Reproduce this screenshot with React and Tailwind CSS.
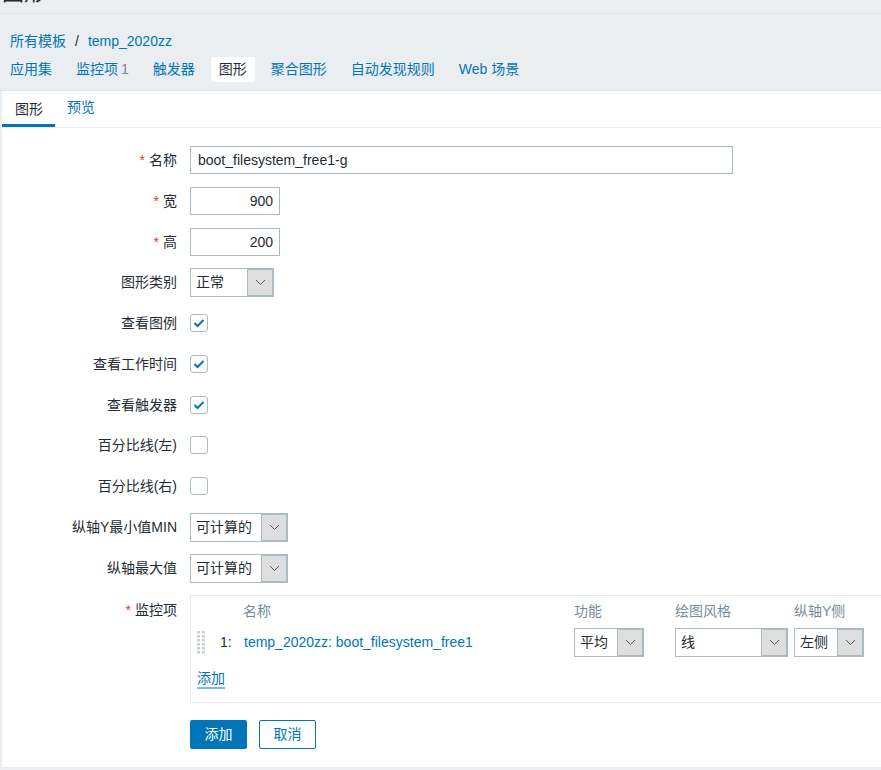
import React from "react";

const FONT = "font-['Liberation_Sans','Noto_Sans_CJK_SC',sans-serif]";

function Chevron() {
  return (
    <svg width="11" height="7" viewBox="0 0 11 7">
      <path d="M1 1 L5.5 5.5 L10 1" fill="none" stroke="#4f5a60" strokeWidth="1" />
    </svg>
  );
}

function Select({ value, w, arrowW = "w-[26px]" }) {
  return (
    <div className={`flex h-[29px] border border-[#acbbc2] bg-white ${w}`}>
      <div className="flex-1 flex items-center pl-[5px] text-[14px] text-[#1f2c33] whitespace-nowrap overflow-hidden">
        {value}
      </div>
      <div className={`${arrowW} flex items-center justify-center bg-[#dedede] border border-[#acbbc2]`}>
        <Chevron />
      </div>
    </div>
  );
}

function Checkbox({ checked }) {
  return (
    <div className="w-[18px] h-[18px] border border-[#acbbc2] rounded-[3px] bg-white flex items-center justify-center">
      {checked && (
        <svg width="12" height="10" viewBox="0 0 12 10">
          <path d="M1.5 5 L4.5 8 L10.5 2" fill="none" stroke="#0275b8" strokeWidth="2" />
        </svg>
      )}
    </div>
  );
}

function Row({ label, req, children, mb = "mb-[13px]", top }) {
  return (
    <div className={`flex ${top ? "items-start" : "items-center"} ${mb} min-h-[28px]`}>
      <div
        className={`w-[177px] shrink-0 text-right text-[14px] text-[#1f2c33] whitespace-nowrap ${
          top ? "pt-[5px]" : ""
        }`}
      >
        {req && <span className="text-[#e33734] mr-[4px]">*</span>}
        {label}
      </div>
      <div className="ml-[13px] flex items-center">{children}</div>
    </div>
  );
}

function DragHandle() {
  const dots = [];
  for (let r = 0; r < 6; r++) {
    for (let c = 0; c < 2; c++) {
      dots.push(<rect key={`${r}-${c}`} x={c * 5} y={r * 4} width="3" height="2.5" fill="#c6cfd4" />);
    }
  }
  return (
    <svg width="8" height="23" viewBox="0 0 8 23">
      {dots}
    </svg>
  );
}

export default function App() {
  const tabs = [
    { t: "应用集" },
    { t: "监控项", n: "1" },
    { t: "触发器" },
    { t: "图形", active: true },
    { t: "聚合图形" },
    { t: "自动发现规则" },
    { t: "Web 场景" },
  ];
  return (
    <div className={`w-[881px] h-[770px] overflow-hidden bg-[#ebeef1] ${FONT}`}>
      {/* page title (cropped) */}
      <div className="h-[14px] border-b border-[#dfe4e7] overflow-hidden">
        <div className="mt-[-18px] ml-[2px] text-[22px] leading-[22px] text-[#1f2c33]">图形</div>
      </div>

      {/* breadcrumb */}
      <div className="pt-[17px] pl-[10px] h-[37px] text-[14px] leading-[20px] text-[#1f2c33] flex items-start">
        <span className="text-[#0275b8]">所有模板</span>
        <span className="mx-[9px]">/</span>
        <span className="text-[#0275b8]">temp_2020zz</span>
      </div>

      {/* tabs */}
      <div className="mt-[6px] pl-[2px] flex gap-[8px] h-[25px]">
        {tabs.map((tab) => (
          <div
            key={tab.t}
            className={`px-[8px] h-[25px] flex items-center text-[14px] whitespace-nowrap rounded-[2px] ${
              tab.active ? "bg-white text-[#1f2c33]" : "text-[#0275b8]"
            }`}
          >
            {tab.t}
            {tab.n && <span className="ml-[3px] text-[#768d99]">{tab.n}</span>}
          </div>
        ))}
      </div>
      <div className="h-[9px] border-b border-[#dfe4e7]" />

      {/* white panel */}
      <div className="ml-[2px] bg-white h-[676px]">
        <div className="flex h-[37px] border-b border-[#ebeef1]">
          <div className="pl-[13px] pr-[12px] flex items-center text-[14px] text-[#1f2c33] border-b-[3px] border-[#0275b8] pt-[3px]">
            图形
          </div>
          <div className="pl-[12px] pr-[12px] flex items-center text-[14px] text-[#0275b8] pb-[3px]">预览</div>
        </div>

        <div className="pt-[18px] ml-[-2px]">
          <Row label="名称" req>
            <div className="w-[543px] h-[28px] border border-[#acbbc2] flex items-center pl-[7px] text-[14px] text-[#1f2c33]">
              boot_filesystem_free1-g
            </div>
          </Row>
          <Row label="宽" req>
            <div className="w-[90px] h-[28px] border border-[#acbbc2] flex items-center justify-end pr-[6px] text-[14px] text-[#1f2c33]">
              900
            </div>
          </Row>
          <Row label="高" req mb="mb-[12px]">
            <div className="w-[90px] h-[28px] border border-[#acbbc2] flex items-center justify-end pr-[6px] text-[14px] text-[#1f2c33]">
              200
            </div>
          </Row>
          <Row label="图形类别" mb="mb-[12px]">
            <Select value="正常" w="w-[84px]" />
          </Row>
          <Row label="查看图例">
            <Checkbox checked />
          </Row>
          <Row label="查看工作时间">
            <Checkbox checked />
          </Row>
          <Row label="查看触发器" mb="mb-[12px]">
            <Checkbox checked />
          </Row>
          <Row label="百分比线(左)">
            <Checkbox />
          </Row>
          <Row label="百分比线(右)">
            <Checkbox />
          </Row>
          <Row label="纵轴Y最小值MIN" mb="mb-[12px]">
            <Select value="可计算的" w="w-[98px]" />
          </Row>
          <Row label="纵轴最大值" mb="mb-[12px]">
            <Select value="可计算的" w="w-[98px]" />
          </Row>
          <Row label="监控项" req top mb="mb-[17px]">
            <div className="w-[900px] h-[108px] border border-[#e6eaec] pl-[6px] flex flex-col">
              <div className="flex h-[31px] items-center text-[14px] text-[#768d99]">
                <div className="w-[23px]" />
                <div className="w-[23px]" />
                <div className="w-[331px]">名称</div>
                <div className="w-[101px]">功能</div>
                <div className="w-[119px]">绘图风格</div>
                <div className="w-[80px]">纵轴Y侧</div>
              </div>
              <div className="flex h-[31px] items-center text-[14px]">
                <div className="w-[23px] flex items-center">
                  <DragHandle />
                </div>
                <div className="w-[24px] text-[#1f2c33]">1:</div>
                <div className="w-[330px] text-[#0275b8]">temp_2020zz: boot_filesystem_free1</div>
                <div className="w-[101px]">
                  <Select value="平均" w="w-[70px]" />
                </div>
                <div className="w-[119px]">
                  <Select value="线" w="w-[113px]" />
                </div>
                <div className="w-[80px]">
                  <Select value="左侧" w="w-[70px]" />
                </div>
              </div>
              <div className="pt-[12px] flex">
                <span className="text-[14px] text-[#0275b8] leading-[17px] border-b-2 border-[#7fb9dc]">添加</span>
              </div>
            </div>
          </Row>

          <div className="flex ml-[190px] gap-[12px]">
            <div className="w-[57px] h-[29px] rounded-[2px] bg-[#0275b8] text-white text-[14px] flex items-center justify-center">
              添加
            </div>
            <div className="w-[57px] h-[29px] rounded-[2px] border border-[#0275b8] bg-white text-[#0275b8] text-[14px] flex items-center justify-center">
              取消
            </div>
          </div>
        </div>
      </div>
    </div>
  );
}
